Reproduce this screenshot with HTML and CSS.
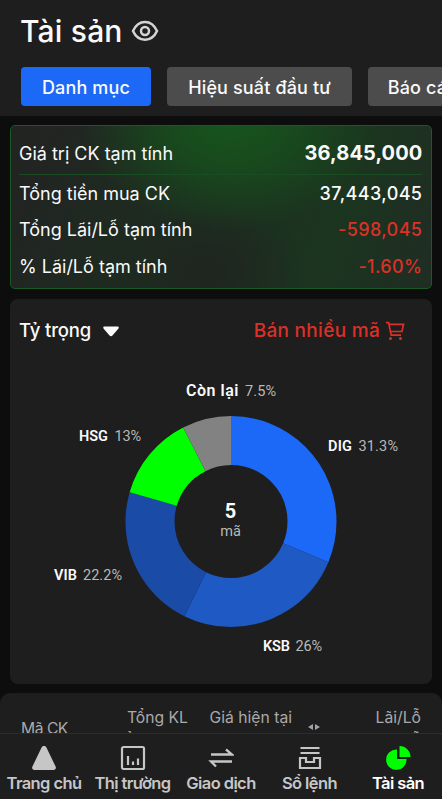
FILE: index.html
```html
<!DOCTYPE html>
<html lang="vi">
<head>
<meta charset="utf-8">
<title>Tài sản</title>
<link rel="stylesheet" href="styles.css">
</head>
<body>
<div class="app">
  <header class="header">
    <div class="title-row">
      <h1 class="title">Tài sản</h1>
      <svg class="eye" width="28" height="24" viewBox="0 0 28 24" fill="none" stroke="#d4d4d4" stroke-width="2.500"><path d="M2 12C4.500 6.500 8.500 3 14 3s9.500 3.500 12 9c-2.500 5.500-6.500 8.700-12 8.700S4.500 17.500 2 12Z"/><circle cx="14" cy="12" r="4"/></svg>
    </div>
    <nav class="tabs">
      <button class="tab tab-active"><span>Danh mục</span></button>
      <button class="tab tab-perf"><span>Hiệu suất đầu tư</span></button>
      <button class="tab tab-report"><span>Báo cáo</span></button>
    </nav>
  </header>

  <section class="summary">
    <div class="row row-main"><span>Giá trị CK tạm tính</span><span class="value total">36,845,000</span></div>
    <div class="row"><span>Tổng tiền mua CK</span><span class="value">37,443,045</span></div>
    <div class="row"><span>Tổng Lãi/Lỗ tạm tính</span><span class="value loss">-598,045</span></div>
    <div class="row"><span>% Lãi/Lỗ tạm tính</span><span class="value loss">-1.60%</span></div>
  </section>

  <section class="weights">
    <div class="weights-head">
      <div class="select"><span>Tỷ trọng</span><svg width="16" height="11" viewBox="0 0 16 11" fill="#fafafa"><path d="M1.500 0.500h13c1.300 0 1.600 1.300.8 2.300L9.700 9.200a2.300 2.300 0 0 1-3.400 0L.7 2.800C-.1 1.800.2.500 1.500.500Z"/></svg></div>
      <div class="sell"><span>Bán nhiều mã</span><svg width="19" height="20" viewBox="0 0 19 20" fill="none" stroke="#dd3026" stroke-width="1.700"><path d="M0 1.600h2.600L5.200 14.200H15M3 3.300h14.500L16 10.500H4.400"/><g fill="#dd3026" stroke="none"><circle cx="4.500" cy="17.400" r="1.500"/><circle cx="14.500" cy="17.400" r="1.500"/></g></svg></div>
    </div>
    <svg class="chart" width="422" height="326" viewBox="10 357 422 326">
      <g fill="none" stroke-width="49" transform="rotate(-90 231 521.500)">
        <circle cx="231" cy="521.500" r="81" pathLength="100" stroke="#1d69f7" stroke-dasharray="31.300 68.700"/>
        <circle cx="231" cy="521.500" r="81" pathLength="100" stroke="#1f59c4" stroke-dasharray="26 74" stroke-dashoffset="-31.300"/>
        <circle cx="231" cy="521.500" r="81" pathLength="100" stroke="#1a4ba6" stroke-dasharray="22.200 77.800" stroke-dashoffset="-57.300"/>
        <circle cx="231" cy="521.500" r="81" pathLength="100" stroke="#00ff00" stroke-dasharray="13 87" stroke-dashoffset="-79.500"/>
        <circle cx="231" cy="521.500" r="81" pathLength="100" stroke="#828282" stroke-dasharray="7.500 92.500" stroke-dashoffset="-92.500"/>
      </g>
      <g class="names">
        <text class="rest" x="186" y="396" textLength="52.500">Còn lại</text>
        <text x="79" y="441" textLength="29">HSG</text>
        <text x="328" y="451" textLength="24">DIG</text>
        <text x="54" y="580" textLength="23">VIB</text>
        <text x="263" y="651" textLength="27">KSB</text>
      </g>
      <g class="shares">
        <text x="245" y="396" textLength="31">7.5%</text>
        <text x="114.500" y="441" textLength="26.500">13%</text>
        <text x="358.500" y="451" textLength="39.500">31.3%</text>
        <text x="83" y="580" textLength="39">22.2%</text>
        <text x="295.500" y="651" textLength="26.500">26%</text>
      </g>
      <text class="count" x="230.500" y="518">5</text>
      <text class="unit" x="230.500" y="536">mã</text>
    </svg>
  </section>

  <section class="table">
    <div class="code">Mã CK</div>
    <div class="col">Tổng KL<br>Tổng mua</div>
    <div class="col">Giá hiện tại<br>Giá mua TB</div>
    <svg class="sort" width="12" height="6" viewBox="0 0 12 6" fill="#a0a0a8"><path d="M5 0v6L0 3ZM7 0v6l5-3Z"/></svg>
    <div class="col">Lãi/Lỗ<br>% Lãi/Lỗ</div>
  </section>

  <nav class="bottom">
    <a class="item"><svg width="26" height="26" viewBox="0 0 26 26" fill="#c6c6c6"><path d="M10.700 2.300c1-1.800 3.600-1.800 4.600 0l9.300 19.200c.9 1.800-.2 3.500-2 3.500H3.400c-1.800 0-2.900-1.700-2-3.500Z"/></svg><span>Trang chủ</span></a>
    <a class="item"><svg width="26" height="26" viewBox="0 0 26 26" fill="none" stroke="#c6c6c6" stroke-width="2.200"><rect x="2" y="2" width="22" height="22" rx="1.500"/><path d="M8 11v9M13 16.500V20M18 13.500V20"/></svg><span>Thị trường</span></a>
    <a class="item"><svg width="26" height="26" viewBox="0 0 26 26" fill="none" stroke="#c6c6c6" stroke-width="2.300"><path d="M3 9.500h21l-6-5M24 16.500H3l5 5"/></svg><span>Giao dịch</span></a>
    <a class="item"><svg width="26" height="26" viewBox="0 0 26 26" fill="none" stroke="#c6c6c6" stroke-width="2.200"><path d="M3.500 3h19M3.500 8h19M3 13h6v4h8v-4h6v10H3Z"/></svg><span>Sổ lệnh</span></a>
    <a class="item active"><svg width="26" height="26" viewBox="0 0 26 26" fill="#00ff00"><path d="M12 4.500V14h9.500A10.200 10.200 0 1 1 12 4.500ZM14.500 1A11 11 0 0 1 25.500 12h-11Z"/></svg><span>Tài sản</span></a>
  </nav>
</div>
</body>
</html>
```
FILE: styles.css
```css
* { box-sizing: border-box; }
body { margin: 0; background: #0d0d0d; color: #fafafa; font-family: Inter, "Noto Sans", sans-serif; }
.app { width: 442px; height: 799px; overflow: hidden; display: flex; flex-direction: column; }
.header { height: 116px; flex: none; background: #1e1e1e; padding: 12px 0 0 20px; }
.title-row { display: flex; height: 38px; align-items: center; gap: 8px; }
.title { margin: 0; font-size: 30px; font-weight: 500; line-height: 38px; letter-spacing: .2px; }
.tabs { display: flex; gap: 16px; margin: 17px 0 0 1px; }
.tab { flex: none; height: 39px; border: 0; border-radius: 4px; background: #4c4c4c; color: #fafafa; font: 500 18px/39px Inter, sans-serif; letter-spacing: .15px; padding: 2px 0 0; white-space: nowrap; }
.tab span { display: block; line-height: 37px; }
.tab-active { width: 130px; background: #1d69f7; }
.tab-perf { width: 185px; }
.tab-report { width: 110px; }
.summary { flex: none; height: 164px; margin: 9px 10px 0; padding: 7px 9px 0 8px; border: 1px solid #1b5a27; border-radius: 5px; background: radial-gradient(ellipse 150px 110px at 52% -4%, #16561c 0%, rgba(22,86,28,.65) 45%, transparent 100%), radial-gradient(ellipse 100px 70px at 47% 90%, #20241f, transparent), linear-gradient(110deg, #222422 5%, #1d2c20 40%, #1b351f 75%, #202d23 98%); }
.row { display: flex; justify-content: space-between; align-items: center; height: 36.500px; font-size: 18px; white-space: nowrap; }
.row-main { height: 42px; padding-bottom: 1px; border-bottom: 1.500px solid #1b4d24; }
.value { font-weight: 500; letter-spacing: .4px; margin-right: -.4px; }
.total { font-size: 20px; font-weight: 700; letter-spacing: .1px; }
.loss { color: #dd3026; }
.weights { flex: none; height: 385px; margin: 10px 10px 0; background: #1e1e1e; border-radius: 8px; }
.weights-head { height: 58px; display: flex; justify-content: space-between; align-items: center; padding: 5px 27px 0 9px; }
.select, .sell { display: flex; align-items: center; white-space: nowrap; }
.select { gap: 12px; font-size: 18.500px; font-weight: 500; letter-spacing: -.15px; padding-bottom: 1px; }
.select svg { position: relative; top: 1px; }
.sell { gap: 6px; font-size: 19px; font-weight: 500; letter-spacing: .3px; color: #dd3026; }
.chart { display: block; }
.chart text { font-family: Roboto, sans-serif; }
.names { font-size: 14.500px; font-weight: 600; fill: #fafafa; }
.names .rest { font-size: 16px; }
.shares { font-size: 14.500px; fill: #b9b9b9; }
.count { font-size: 20px; font-weight: 700; fill: #fafafa; text-anchor: middle; }
.unit { font-size: 14.500px; fill: #b9b9b9; text-anchor: middle; }
.table { flex: none; height: 40px; margin-top: 9px; padding: 13px 0 0 21px; background: #1e1e1e; border-radius: 10px 10px 0 0; overflow: hidden; display: grid; grid-template-columns: 90px 77px 104px 28px 101px; color: #aaa; font-size: 15.700px; line-height: 23px; white-space: nowrap; }
.code { padding-top: 11px; letter-spacing: -.5px; }
.col { text-align: right; }
.sort { margin: 18px 0 0 16px; }
.bottom { flex: none; height: 66px; background: #1e1e1e; border-top: 1px solid #2c2c2c; display: grid; grid-template-columns: 88px 89px 88px 89px 88px; padding-top: 11px; }
.item { display: flex; flex-direction: column; align-items: center; font-size: 16.500px; font-weight: 600; line-height: 25px; letter-spacing: -.6px; color: #c6c6c6; white-space: nowrap; }
.active { color: #fff; }
```
